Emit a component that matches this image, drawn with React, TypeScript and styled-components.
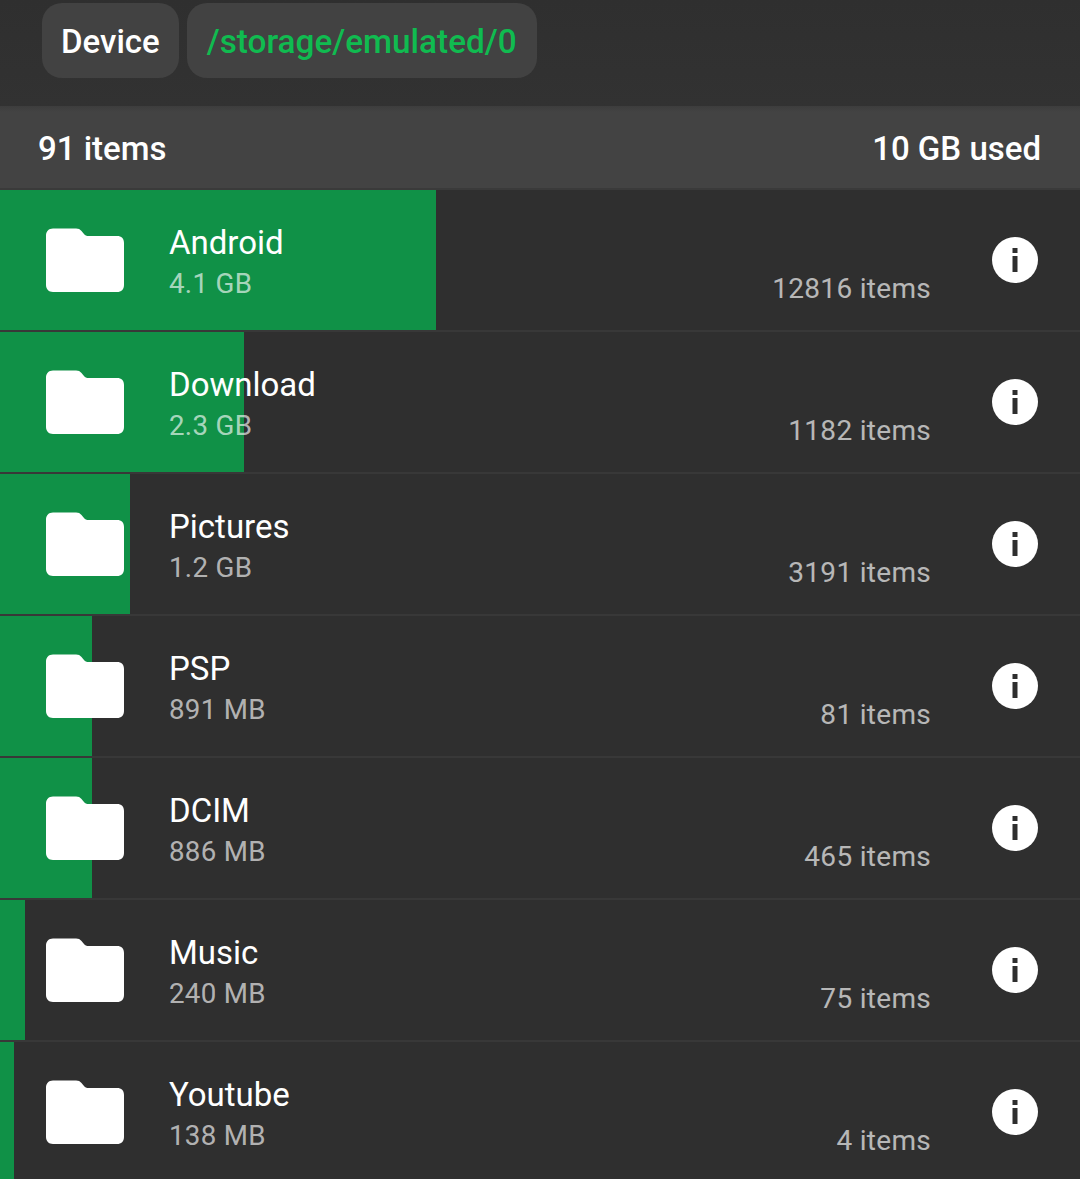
import React from "react";
import styled, { createGlobalStyle } from "styled-components";

const Global = createGlobalStyle`
  html, body { margin: 0; padding: 0; background: #2f2f2f; }
  body { font-family: Roboto, "Liberation Sans", sans-serif; overflow: hidden; }
`;

const Page = styled.div`
  width: 1080px;
  height: 1179px;
  overflow: hidden;
  background: #2f2f2f;
`;

const Toolbar = styled.div`
  height: 106px;
  box-sizing: border-box;
  padding: 3px 0 0 42px;
  display: flex;
  align-items: flex-start;
  gap: 8px;
  background: linear-gradient(#2f2f2f, #323232);
`;

const Chip = styled.div<{ $green?: boolean }>`
  height: 75px;
  box-sizing: border-box;
  padding: 2px ${(p) => (p.$green ? "20px" : "19px")} 0;
  display: flex;
  align-items: center;
  border-radius: 20px;
  background: #424242;
  font-size: ${(p) => (p.$green ? "33.3px" : "33px")};
  font-weight: 500;
  color: ${(p) => (p.$green ? "#10bb50" : "#ffffff")};
`;

const Summary = styled.div`
  height: 84px;
  box-sizing: border-box;
  padding: 2px 39px 0 38px;
  display: flex;
  align-items: center;
  justify-content: space-between;
  background: linear-gradient(#3d3d3d, #434343 6px);
  border-bottom: 2px solid #3a3a3a;
  font-size: 33px;
  font-weight: 500;
  color: #ffffff;
`;

const Row = styled.div`
  position: relative;
  height: 142px;
  box-sizing: border-box;
  border-bottom: 2px solid #383838;
  display: flex;
  align-items: stretch;
`;

const Usage = styled.div`
  position: absolute;
  left: 0;
  top: 0;
  bottom: 0;
  background: #109147;
`;

const FolderIcon = styled.svg`
  position: relative;
  width: 80px;
  height: 66px;
  margin: 37px 44px 0 45px;
  flex: none;
`;

const Texts = styled.div`
  position: relative;
  flex: 1;
  padding-top: 33px;
`;

const Name = styled.div`
  font-size: 33px;
  line-height: 40px;
  color: #ffffff;
`;

const Size = styled.div`
  font-size: 27.7px;
  line-height: 34px;
  margin-top: 4px;
  letter-spacing: 0.3px;
  color: rgba(255, 255, 255, 0.65);
`;

const Count = styled.div`
  position: relative;
  align-self: flex-end;
  margin-bottom: 24px;
  font-size: 28px;
  line-height: 34px;
  letter-spacing: 0.3px;
  color: rgba(255, 255, 255, 0.67);
`;

const InfoIcon = styled.svg`
  position: relative;
  width: 46px;
  height: 46px;
  margin: 47px 42px 0 61px;
  flex: none;
`;

const rows = [
  { name: "Android", size: "4.1 GB", count: "12816 items", bar: 436 },
  { name: "Download", size: "2.3 GB", count: "1182 items", bar: 244 },
  { name: "Pictures", size: "1.2 GB", count: "3191 items", bar: 130 },
  { name: "PSP", size: "891 MB", count: "81 items", bar: 92 },
  { name: "DCIM", size: "886 MB", count: "465 items", bar: 92 },
  { name: "Music", size: "240 MB", count: "75 items", bar: 25 },
  { name: "Youtube", size: "138 MB", count: "4 items", bar: 14 },
];

export default function App() {
  return (
    <Page>
      <Global />
      <Toolbar>
        <Chip>Device</Chip>
        <Chip $green>/storage/emulated/0</Chip>
      </Toolbar>
      <Summary>
        <span>91 items</span>
        <span>10 GB used</span>
      </Summary>
      {rows.map((r) => (
        <Row key={r.name}>
          <Usage style={{ width: r.bar }} />
          <FolderIcon viewBox="0 0 80 66">
            <path
              fill="#fff"
              d="M8 1.500h23c2.500 0 4 .8 5.500 2.500l2.500 3c1.200 1.500 2.500 2 4.500 2H72c4.500 0 7 2.500 7 7V58c0 4.500-2.800 7-7 7H8c-4.200 0-7-2.800-7-7V8.500c0-4.200 2.800-7 7-7z"
            />
          </FolderIcon>
          <Texts>
            <Name>{r.name}</Name>
            <Size>{r.size}</Size>
          </Texts>
          <Count>{r.count}</Count>
          <InfoIcon viewBox="0 0 46 46">
            <circle cx="23" cy="23" r="23" fill="#fff" />
            <rect x="20.500" y="11" width="5" height="5" fill="#2e2e2e" />
            <rect x="20.500" y="19" width="5" height="16" fill="#2e2e2e" />
          </InfoIcon>
        </Row>
      ))}
    </Page>
  );
}
